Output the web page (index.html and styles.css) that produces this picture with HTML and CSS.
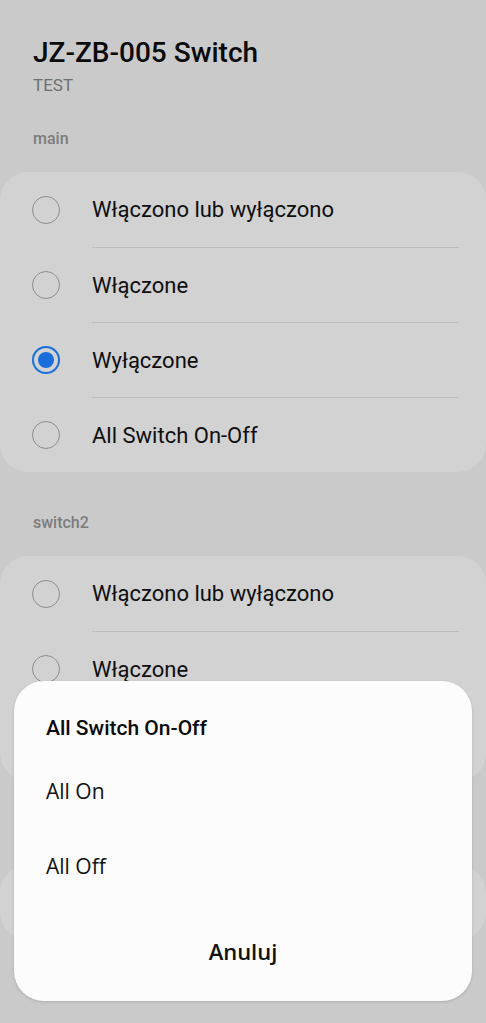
FILE: index.html
```html
<!DOCTYPE html>
<html>
  <head>
    <meta charset="utf-8">
    <link rel="stylesheet" href="styles.css">
  </head>
  <body>
    <div class="page">
      <div class="header">
        <div class="title">JZ-ZB-005 Switch</div>
        <div class="subtitle">TEST</div>
      </div>

      <div class="section-label first">main</div>
      <div class="card">
        <div class="row"><span class="radio"></span><span class="label">Włączono lub wyłączono</span></div>
        <div class="row"><span class="radio"></span><span class="label">Włączone</span></div>
        <div class="row"><span class="radio checked"></span><span class="label">Wyłączone</span></div>
        <div class="row"><span class="radio"></span><span class="label">All Switch On-Off</span></div>
      </div>

      <div class="section-label">switch2</div>
      <div class="card">
        <div class="row"><span class="radio"></span><span class="label">Włączono lub wyłączono</span></div>
        <div class="row"><span class="radio"></span><span class="label">Włączone</span></div>
        <div class="row"><span class="radio"></span><span class="label"></span></div>
      </div>

      <div class="section-label"></div>
      <div class="card">
        <div class="row"><span class="radio"></span><span class="label"></span></div>
      </div>
    </div>

    <!-- popup over the dimmed page -->
    <div class="dialog">
      <div class="dialog-title">All Switch On-Off</div>
      <div class="dialog-list">
        <div class="dialog-item">All On</div>
        <div class="dialog-item">All Off</div>
      </div>
      <div class="dialog-button">Anuluj</div>
    </div>
  </body>
</html>
```

FILE: styles.css
```css
body {
  margin: 0;
  background: #cacaca;
  font-family: Roboto, "Liberation Sans", sans-serif;
  color: #0e0e0e;
  overflow: hidden;
}

.page {
  height: 1023px;
}

.header {
  padding: 36px 33px 0;
}

.title {
  font-size: 28px;
  line-height: 34px;
  font-weight: 500;
  color: #0a0a0a;
}

.subtitle {
  margin-top: 4px;
  font-size: 17px;
  line-height: 22px;
  color: #6f6f6f;
}

.section-label {
  margin: 40px 33px 22px;
  height: 22px;
  font-size: 16px;
  line-height: 22px;
  font-weight: 500;
  color: #7c7c7c;
}

.section-label.first {
  margin-top: 32px;
}

.card {
  background: #d2d2d2;
  border-radius: 28px;
  padding: 0;
}

.row {
  display: flex;
  align-items: center;
  gap: 32px;
  height: 75px;
  padding-left: 32px;
}

.row + .row .label {
  border-top: 1px solid #bcbcbc;
}

.row .label {
  flex: 1;
  height: 75px;
  line-height: 75px;
  margin-right: 27px;
  font-size: 22px;
  box-sizing: border-box;
  margin-top: -1px;
}

.radio {
  width: 28px;
  height: 28px;
  box-sizing: border-box;
  border: 1.5px solid #8c8c8c;
  border-radius: 50%;
  flex: none;
  display: flex;
  align-items: center;
  justify-content: center;
}

.radio.checked {
  border: 2px solid #1a6edb;
}

.radio.checked:after {
  content: "";
  width: 16px;
  height: 16px;
  border-radius: 50%;
  background: #1a6edb;
}

.dialog {
  position: absolute;
  left: 14px;
  top: 681px;
  width: 458px;
  height: 320px;
  box-sizing: border-box;
  background: #fcfcfc;
  border-radius: 30px;
  box-shadow: 0 1px 3px rgba(0, 0, 0, 0.15);
  padding: 24px 0 20px;
}

.dialog-title {
  padding: 0 32px;
  font-size: 21px;
  line-height: 46px;
  font-weight: 500;
  color: #0a0a0a;
}

.dialog-list {
  margin-top: 3px;
}

.dialog-item {
  padding: 0 32px;
  height: 75px;
  line-height: 75px;
  font-family: "Open Sans", "Noto Sans", sans-serif;
  font-size: 21px;
  color: #111;
}

.dialog-button {
  margin-top: 17px;
  height: 60px;
  line-height: 60px;
  text-align: center;
  font-family: "Open Sans", "Noto Sans", sans-serif;
  font-size: 22px;
  font-weight: 600;
  color: #111;
}
```
